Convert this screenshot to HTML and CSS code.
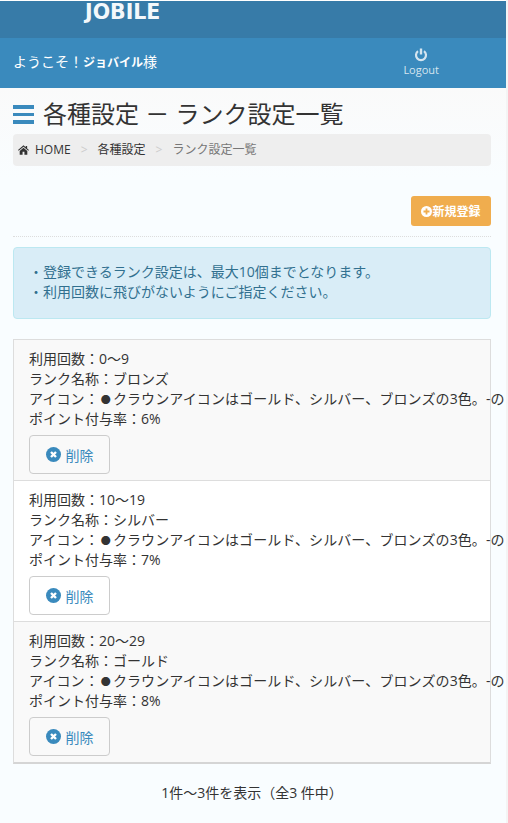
FILE: index.html
```html
<!DOCTYPE html>
<html lang="ja">
<head>
    <meta charset="UTF-8">
    <meta name="viewport" content="width=device-width, initial-scale=1.0">
    <title>ランク設定一覧</title>
    <link rel="stylesheet" href="styles.css">
</head>
<body>
    <div class="page">
        <header>
            <div class="brand">JOBILE</div>
            <div class="userbar">
                <div class="welcome">ようこそ！<span class="username">ジョバイル</span>様</div>
                <a class="logout">
                    <svg width="14" height="14" viewBox="0 0 14 14"><path d="M4 3.2a5 5 0 1 0 6 0" fill="none" stroke="#d5e5f0" stroke-width="2.200"/><path d="M7 0.500v6" stroke="#d5e5f0" stroke-width="2.400"/></svg>
                    <span>Logout</span>
                </a>
            </div>
        </header>

        <main>
            <div class="title">
                <div class="menuicon"><i></i><i></i><i></i></div>
                <h1>各種設定 － ランク設定一覧</h1>
            </div>
            <nav class="breadcrumb">
                <svg width="11" height="10" viewBox="0 0 13 11"><path d="M6.500 0L0 5.600l.8.900L6.500 1.700l5.700 4.800.8-.9L10.800 3.700V.8H9.100V2.300zM2 6.600V11h3.400V7.600h2.200V11H11V6.600L6.500 2.800z" fill="#333"/></svg>
                <a class="crumb-home">HOME</a>
                <span class="sep">&gt;</span>
                <a>各種設定</a>
                <span class="sep">&gt;</span>
                <span class="current">ランク設定一覧</span>
            </nav>

            <div class="actions">
                <button class="btn-new">
                    <svg width="11" height="11" viewBox="0 0 11 11"><circle cx="5.500" cy="5.500" r="5.500" fill="#fff"/><path d="M2.500 5.500h6M5.500 2.500v6" stroke="#f0ad4e" stroke-width="1.800"/></svg>新規登録
                </button>
            </div>

            <div class="alert">
                <p>・登録できるランク設定は、最大10個までとなります。</p>
                <p>・利用回数に飛びがないようにご指定ください。</p>
            </div>

            <div class="list">
                <div class="item odd">
                    <p>利用回数：0～9</p>
                    <p>ランク名称：ブロンズ</p>
                    <p class="iconline">アイコン：<span class="dot">●</span>クラウンアイコンはゴールド、シルバー、ブロンズの3色。-の</p>
                    <p>ポイント付与率：6%</p>
                    <button class="btn-del">
                        <svg width="15" height="15" viewBox="0 0 15 15"><circle cx="7.500" cy="7.500" r="7.500" fill="#3a8abd"/><path d="M5 5l5 5M10 5l-5 5" stroke="#fff" stroke-width="2.400"/></svg>削除
                    </button>
                </div>
                <div class="item">
                    <p>利用回数：10～19</p>
                    <p>ランク名称：シルバー</p>
                    <p class="iconline">アイコン：<span class="dot">●</span>クラウンアイコンはゴールド、シルバー、ブロンズの3色。-の</p>
                    <p>ポイント付与率：7%</p>
                    <button class="btn-del">
                        <svg width="15" height="15" viewBox="0 0 15 15"><circle cx="7.500" cy="7.500" r="7.500" fill="#3a8abd"/><path d="M5 5l5 5M10 5l-5 5" stroke="#fff" stroke-width="2.400"/></svg>削除
                    </button>
                </div>
                <div class="item odd">
                    <p>利用回数：20～29</p>
                    <p>ランク名称：ゴールド</p>
                    <p class="iconline">アイコン：<span class="dot">●</span>クラウンアイコンはゴールド、シルバー、ブロンズの3色。-の</p>
                    <p>ポイント付与率：8%</p>
                    <button class="btn-del">
                        <svg width="15" height="15" viewBox="0 0 15 15"><circle cx="7.500" cy="7.500" r="7.500" fill="#3a8abd"/><path d="M5 5l5 5M10 5l-5 5" stroke="#fff" stroke-width="2.400"/></svg>削除
                    </button>
                </div>
            </div>

            <div class="pager">1件～3件を表示（全3 件中）</div>
        </main>
    </div>
</body>
</html>
```

FILE: styles.css
```css
html, body {
    margin: 0;
    height: 100%;
    overflow: hidden;
    background-color: #f4f4f4;
}

body {
    font-family: 'Open Sans', 'Noto Sans CJK JP', sans-serif;
    font-size: 14px;
    line-height: 20px;
    color: #333;
}

p {
    margin: 0;
}

svg {
    flex-shrink: 0;
}

.page {
    width: 506px;
    height: 823px;
    overflow: hidden;
    background-color: #f9fdff;
}

header {
    padding-top: 1px;
    background-color: #fff;
}

.brand {
    height: 37px;
    padding-left: 85px;
    background-color: #377ba8;
    color: #f4f8fb;
    font-family: 'DejaVu Sans', sans-serif;
    font-size: 20.500px;
    font-weight: 700;
    line-height: 22px;
}

.userbar {
    display: flex;
    justify-content: space-between;
    align-items: center;
    height: 48px;
    padding: 0 67px 2px 13px;
    background-color: #3a8abd;
    color: #fff;
}

.username {
    font-size: 12px;
    font-weight: 700;
}

.logout {
    display: flex;
    flex-direction: column;
    align-items: center;
    gap: 1px;
    color: #d5e5f0;
    font-size: 11px;
    line-height: 14px;
}

main {
    padding: 0 15px 0 13px;
    background: linear-gradient(#fafafa, #f9fdff 90px);
}

.title {
    display: flex;
    align-items: center;
    gap: 9px;
    height: 41px;
    padding-top: 5px;
}

.title h1 {
    margin: 0;
    font-size: 24px;
    font-weight: 400;
    line-height: 30px;
}

.menuicon {
    display: flex;
    flex-direction: column;
    gap: 4px;
    width: 21px;
    margin-top: 2px;
}

.menuicon i {
    height: 3.500px;
    background-color: #3a8abd;
}

.breadcrumb {
    display: flex;
    align-items: center;
    height: 32px;
    padding: 0 5px;
    background-color: #eee;
    border-radius: 4px;
    font-size: 12px;
}

.crumb-home {
    margin-left: 6px;
}

.sep {
    margin: 0 10px;
    color: #ccc;
}

.current {
    color: #777;
}

.actions {
    display: flex;
    justify-content: flex-end;
    margin-top: 30px;
    padding-bottom: 10px;
    border-bottom: 1px dotted #ddd;
}

.btn-new {
    display: flex;
    align-items: center;
    justify-content: center;
    width: 80px;
    height: 30px;
    padding: 0;
    background-color: #f0ad4e;
    border: none;
    border-radius: 3px;
    color: #fff;
    font-family: inherit;
    font-size: 12px;
    font-weight: 700;
}

.alert {
    margin-top: 10px;
    padding: 14px 15px 15px;
    height: 41px;
    background-color: #d9edf7;
    border: 1px solid #bce8f1;
    border-radius: 4px;
    color: #31708f;
    line-height: 20px;
}

.list {
    margin-top: 20px;
    border: 1px solid #ddd;
    border-bottom: 2px solid #d5d5d5;
}

.item {
    height: 131px;
    padding: 9px 15px 0;
    border-bottom: 1px solid #ddd;
    background-color: #fff;
    white-space: nowrap;
}

.item:last-child {
    border-bottom: none;
}

.item.odd {
    background-color: #f9f9f9;
}

.iconline {
    height: 20px;
    letter-spacing: 0.100px;
}

.dot {
    margin: 0 2px;
    font-size: 10px;
    line-height: 10px;
}

.btn-del {
    display: flex;
    align-items: center;
    justify-content: center;
    gap: 5px;
    width: 81px;
    height: 39px;
    margin-top: 6px;
    padding: 0;
    background-color: #fff;
    border: 1px solid #ccc;
    border-radius: 4px;
    color: #3a8abd;
    font-family: inherit;
    font-size: 14px;
}

.item.odd .btn-del {
    background-color: #f9f9f9;
}

.pager {
    margin-top: 19px;
    text-align: center;
}
```
